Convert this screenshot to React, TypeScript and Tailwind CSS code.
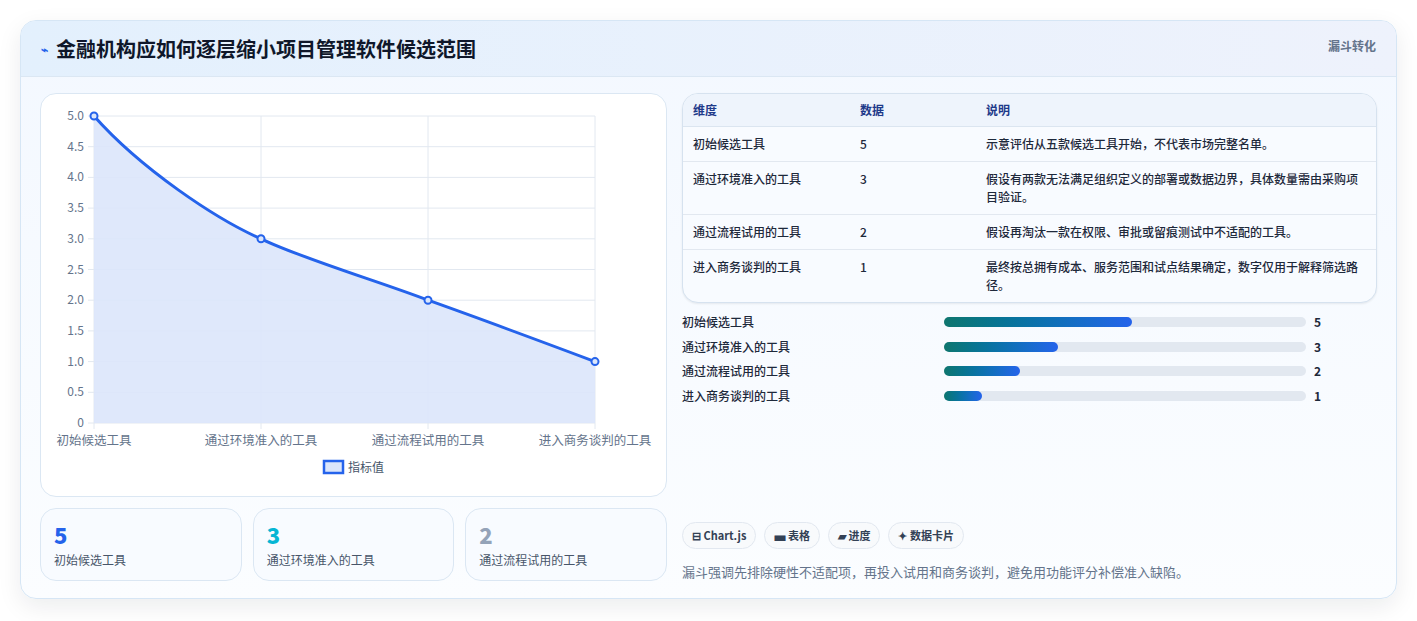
const rows = [
  { name: '初始候选工具', value: 5, note: '示意评估从五款候选工具开始，不代表市场完整名单。', w: 'w-[52%]' },
  { name: '通过环境准入的工具', value: 3, note: '假设有两款无法满足组织定义的部署或数据边界，具体数量需由采购项目验证。', w: 'w-[31.5%]' },
  { name: '通过流程试用的工具', value: 2, note: '假设再淘汰一款在权限、审批或留痕测试中不适配的工具。', w: 'w-[21%]' },
  { name: '进入商务谈判的工具', value: 1, note: '最终按总拥有成本、服务范围和试点结果确定，数字仅用于解释筛选路径。', w: 'w-[10.5%]' },
]

const font = { fontFamily: '"Noto Sans CJK SC", "Noto Sans", sans-serif' }

function Chart() {
  const x0 = 53, x1 = 554, yTop = 22, yBot = 329
  const ys = Array.from({ length: 11 }, (_, i) => i * 0.5)
  const xs = [53, 220, 387, 554]
  const yOf = (v: number) => yBot - (v / 5) * (yBot - yTop)
  const pts = [5, 3, 2, 1].map((v, i) => [xs[i], yOf(v)])
  const line = `M53,${yOf(5)} C100,75 175,125 220,${yOf(3)} C262,165 340,188 387,${yOf(2)} C440,225 515,253 554,${yOf(1)}`
  return (
    <svg width="625" height="401" className="block" style={font}>
      {ys.map((v) => (
        <g key={v}>
          <line x1={x0 - 6} x2={x1} y1={yOf(v)} y2={yOf(v)} stroke="#e2e8f0" />
          <text x={43} y={yOf(v) + 4} textAnchor="end" fontSize="12" fill="#64748b">{v === 0 ? '0' : v.toFixed(1)}</text>
        </g>
      ))}
      {xs.map((x) => (
        <line key={x} x1={x} x2={x} y1={yTop} y2={yBot + 6} stroke="#e2e8f0" />
      ))}
      <path d={`${line} L554,${yBot} L53,${yBot} Z`} fill="#dbe6fb" opacity="0.9" />
      <path d={line} fill="none" stroke="#2563eb" strokeWidth="3" />
      {pts.map(([x, y]) => (
        <circle key={x} cx={x} cy={y} r="3.5" fill="#dbe6fb" stroke="#2563eb" strokeWidth="2" />
      ))}
      {rows.map((r, i) => (
        <text key={r.name} x={xs[i]} y={351} textAnchor="middle" fontSize="12.5" fill="#64748b">{r.name}</text>
      ))}
      <rect x={283} y={367} width={19} height={12} fill="#dbe6fb" stroke="#2563eb" strokeWidth="2.5" />
      <text x={307} y={378} fontSize="12" fill="#475569">指标值</text>
    </svg>
  )
}

export default function App() {
  return (
    <div className="min-h-screen bg-white pt-5 px-5" style={font}>
      <div className="w-[1377px] rounded-2xl border border-[#d6e6f5] bg-gradient-to-b from-[#f3f8ff] to-[#fbfdff] shadow-[0_8px_24px_rgba(15,23,42,0.08)] overflow-hidden">
        <div className="h-[56px] flex items-start justify-between px-5 bg-gradient-to-r from-[#e3f0fd] to-[#eef2fc] border-b border-[#dbe7f3]">
          <h1 className="mt-[13px] flex items-center gap-2 text-[20px] font-bold text-[#0f172a]">
            <span className="text-[12px] text-[#2563eb]">⌁</span>
            金融机构应如何逐层缩小项目管理软件候选范围
          </h1>
          <span className="mt-[16px] text-[12px] font-semibold text-[#64748b]">漏斗转化</span>
        </div>
        <div className="flex gap-[15px] px-[19px] pt-[16px] pb-[17px]">
          <div className="w-[627px] flex flex-col gap-[11px]">
            <div className="h-[404px] rounded-2xl border border-[#dbe7f3] bg-white">
              <Chart />
            </div>
            <div className="grid grid-cols-3 gap-[11px]">
              {[
                ['5', 'text-[#2563eb]', rows[0].name],
                ['3', 'text-[#06b6d4]', rows[1].name],
                ['2', 'text-[#94a3b8]', rows[2].name],
              ].map(([n, c, l]) => (
                <div key={n} className="h-[73px] rounded-2xl border border-[#dbe7f3] bg-[#f8fbff] px-[13px] pt-[11px]">
                  <div className={`text-[22px] font-extrabold leading-[28px] ${c}`}>{n}</div>
                  <div className="mt-[3px] text-[12px] text-[#475569]">{l}</div>
                </div>
              ))}
            </div>
          </div>
          <div className="flex-1 flex flex-col">
            <div className="rounded-2xl border border-[#d6e2ef] bg-[#f8fbff] overflow-hidden text-[12px] text-[#1e293b] shadow-[0_1px_2px_rgba(15,23,42,0.08)]">
              <div className="flex h-[33px] items-center bg-[#eef4fc] border-b border-[#dbe5f0] font-semibold text-[#1e3a8a]">
                <div className="w-[177px] pl-[10px]">维度</div>
                <div className="w-[126px]">数据</div>
                <div className="flex-1">说明</div>
              </div>
              {rows.map((r, i) => (
                <div key={r.name} className={`flex py-[8px] leading-[18px] font-medium ${i < 3 ? 'border-b border-[#e2e8f0]' : ''}`}>
                  <div className="w-[177px] pl-[10px]">{r.name}</div>
                  <div className="w-[126px]">{r.value}</div>
                  <div className="flex-1 pr-[8px]">{r.note}</div>
                </div>
              ))}
            </div>
            <div className="mt-[10px] flex flex-col gap-[6.5px]">
              {rows.map((r) => (
                <div key={r.name} className="flex items-center h-[18px] text-[12px] font-medium text-[#1e293b]">
                  <div className="w-[262px]">{r.name}</div>
                  <div className="w-[362px] h-[10px] rounded-full bg-[#e2e8f0]">
                    <div className={`h-full rounded-full bg-gradient-to-r from-[#0f766e] to-[#2563eb] ${r.w}`} />
                  </div>
                  <div className="ml-[8px] font-bold">{r.value}</div>
                </div>
              ))}
            </div>
            <div className="mt-auto flex gap-[8px]">
              {['⊟ Chart.js', '▄ 表格', '▰ 进度', '✦ 数据卡片'].map((c) => (
                <span key={c} className="h-[27px] flex items-center rounded-full border border-[#e2e8f0] bg-[#f8fafc] px-[9px] text-[11px] font-semibold text-[#334155]">{c}</span>
              ))}
            </div>
            <p className="mt-[13px] text-[13px] text-[#64748b]">漏斗强调先排除硬性不适配项，再投入试用和商务谈判，避免用功能评分补偿准入缺陷。</p>
          </div>
        </div>
      </div>
    </div>
  )
}
